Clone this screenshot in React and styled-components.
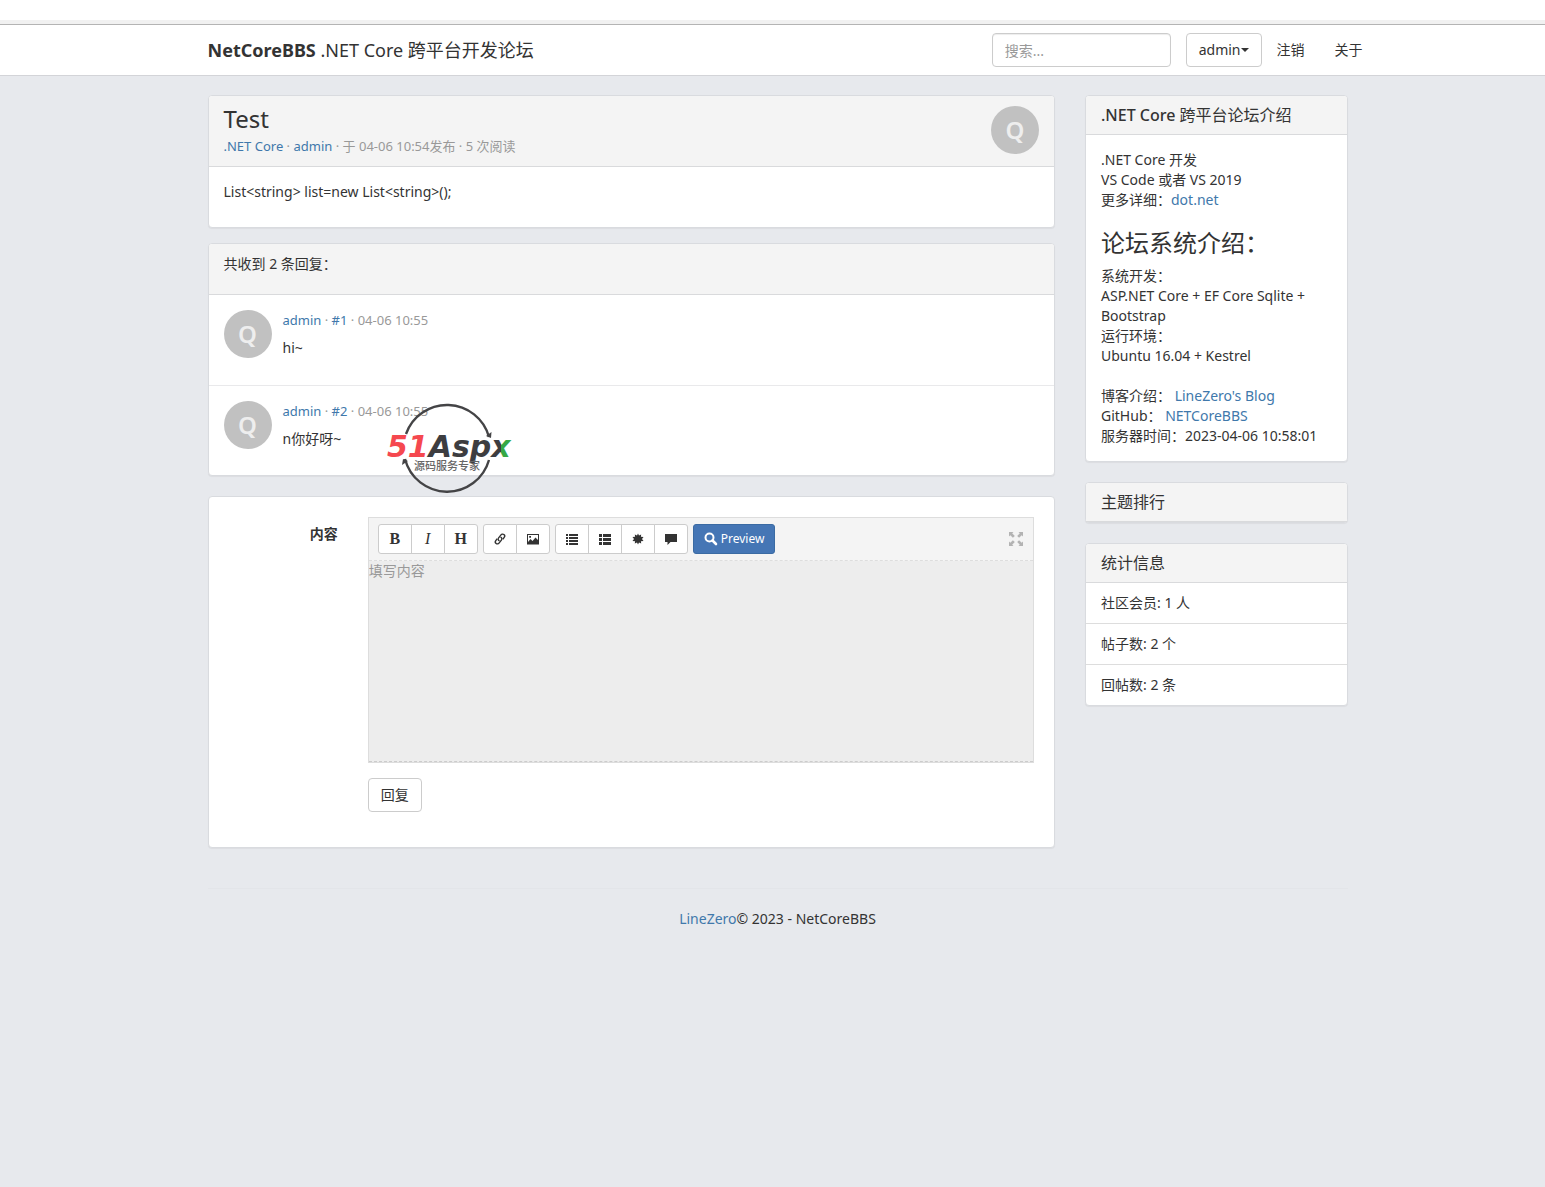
import React from "react";
import styled, { createGlobalStyle, css } from "styled-components";

const replies = [
  { id: 1, user: "admin", time: "04-06 10:55", text: "hi~" },
  { id: 2, user: "admin", time: "04-06 10:55", text: "n你好呀~" },
];

const stats = ["社区会员: 1 人", "帖子数: 2 个", "回帖数: 2 条"];

function LinkIcon() {
  return (
    <Icon viewBox="0 0 14 14" $line>
      <path d="M6.6 8.9C5.2 8.6 4.7 7 5.6 5.9L8 2.9c.7-.9 2-1.1 2.9-.4s1 2 .3 2.9L9.8 7.2" />
      <path d="M7.4 5.1c1.4.3 1.9 1.9 1 3L6 11.1c-.7.9-2 1.1-2.9.4s-1-2-.3-2.9l1.4-1.800" />
    </Icon>
  );
}

function PictureIcon() {
  return (
    <Icon viewBox="0 0 14 14">
      <path
        fillRule="evenodd"
        d="M1 2h12v10.5H1zM2 3v7l2.5-3 2 2 3-3.5L12 8V3zM3.2 4H5v1.800H3.2z"
      />
    </Icon>
  );
}

function ListIcon() {
  return (
    <Icon viewBox="0 0 14 14">
      <path d="M1 2h2v2H1zM4 2h9v2H4zM1 5h2v2H1zM4 5h9v2H4zM1 8h2v2H1zM4 8h9v2H4zM1 11h2v2H1zM4 11h9v2H4z" />
    </Icon>
  );
}

function ThListIcon() {
  return (
    <Icon viewBox="0 0 14 14">
      <path d="M1 2h3v3H1zM5 2h8v3H5zM1 6h3v3H1zM5 6h8v3H5zM1 10h3v3H1zM5 10h8v3H5z" />
    </Icon>
  );
}

function CertificateIcon() {
  return (
    <Icon viewBox="0 0 14 14">
      <path d="M7 1.500 8 3.500l2.200-1L9.900 4.800l2.600.3L11 7l1.500 1.900-2.600.3.3 2.300-2.200-1L7 12.500l-1-2-2.200 1 .3-2.300-2.600-.3L3 7 1.500 5.100l2.600-.3-.3-2.300 2.200 1z" />
    </Icon>
  );
}

function CommentIcon() {
  return (
    <Icon viewBox="0 0 14 14">
      <path d="M1 2h12v8H6.500l-3 3v-3H1z" />
    </Icon>
  );
}

function SearchIcon() {
  return (
    <Icon viewBox="0 0 14 14">
      <circle cx="5.5" cy="5.5" r="4" fill="none" stroke="currentColor" strokeWidth="2" />
      <path d="M8.5 8.500l3.500 3.500" stroke="currentColor" strokeWidth="2.6" strokeLinecap="round" />
    </Icon>
  );
}

function FullscreenIcon() {
  return (
    <Icon viewBox="0 0 14 14">
      <path d="M0 0h4.500L3.200 1.300l2.600 2.600-1.900 1.900-2.600-2.600L0 4.500zM14 0v4.500l-1.300-1.300-2.600 2.600-1.900-1.900 2.600-2.600L9.500 0zM0 14V9.500l1.300 1.300 2.600-2.600 1.900 1.900-2.600 2.600L4.500 14zM14 14H9.500l1.300-1.300-2.600-2.600 1.900-1.900 2.600 2.600L14 9.500z" />
    </Icon>
  );
}

function SiteMark() {
  return (
    <Mark viewBox="0 0 130 96" role="img" aria-label="51Aspx">
      <defs>
        <linearGradient id="xfill" gradientUnits="userSpaceOnUse" x1="107" x2="127" y1="0" y2="0">
          <stop offset="0.5" stopColor="#3d3d40" />
          <stop offset="0.5" stopColor="#36a846" />
        </linearGradient>
      </defs>
      <g fill="none" stroke="#444446" strokeWidth="2.4">
        <path d="M22 34A43.500 43.500 0 0 1 105 37" />
        <path d="M105 60A43.500 43.500 0 0 1 21 59" />
      </g>
      <path d="M102 36l5 2 .5-6zM24 61l-5-2-1 6z" fill="#444446" />
      <text x="3" y="57" className="name">
        <tspan fill="#f5484f">51</tspan>
        <tspan fill="#3d3d40">Asp</tspan>
        <tspan fill="url(#xfill)">x</tspan>
      </text>
      <text x="30" y="70" className="sub">源码服务专家</text>
    </Mark>
  );
}

export default function App() {
  return (
    <>
      <GlobalStyle />
      <TopStrip />
      <Navbar>
        <NavInner>
          <Brand href="#">
            <b>NetCoreBBS</b> .NET Core 跨平台开发论坛
          </Brand>
          <NavRight>
            <SearchInput type="text" placeholder="搜索..." aria-label="搜索" />
            <Button type="button">
              admin
              <Caret />
            </Button>
            <NavLink href="#">注销</NavLink>
            <NavLink href="#">关于</NavLink>
          </NavRight>
        </NavInner>
      </Navbar>
      <Page>
        <Columns>
          <Column as="main">
            <Panel $gap={15}>
              <TopicHeading>
                <div>
                  <TopicTitle>Test</TopicTitle>
                  <Meta>
                    <a href="#">.NET Core</a> · <a href="#">admin</a> · 于 04-06 10:54发布 · 5 次阅读
                  </Meta>
                </div>
                <Avatar>Q</Avatar>
              </TopicHeading>
              <PanelBody>
                <Paragraph>List&lt;string&gt; list=new List&lt;string&gt;();</Paragraph>
              </PanelBody>
            </Panel>

            <Panel>
              <PanelHeading>
                <Paragraph>共收到 2 条回复：</Paragraph>
              </PanelHeading>
              <ReplyList>
                {replies.map((reply) => (
                  <Reply key={reply.id}>
                    <Avatar>Q</Avatar>
                    <div>
                      <Meta>
                        <a href="#">{reply.user}</a> · <a href="#">#{reply.id}</a> · {reply.time}
                      </Meta>
                      <ReplyText>{reply.text}</ReplyText>
                    </div>
                  </Reply>
                ))}
              </ReplyList>
              <SiteMark />
            </Panel>

            <Panel>
              <ReplyForm>
                <FormLabel htmlFor="content">内容</FormLabel>
                <FormField>
                  <Editor>
                    <Toolbar>
                      <ButtonGroup>
                        <ToolButton type="button" aria-label="Bold"><Letter>B</Letter></ToolButton>
                        <ToolButton type="button" aria-label="Italic"><Letter $italic>I</Letter></ToolButton>
                        <ToolButton type="button" aria-label="Heading"><Letter>H</Letter></ToolButton>
                      </ButtonGroup>
                      <ButtonGroup>
                        <ToolButton type="button" aria-label="Link"><LinkIcon /></ToolButton>
                        <ToolButton type="button" aria-label="Image"><PictureIcon /></ToolButton>
                      </ButtonGroup>
                      <ButtonGroup>
                        <ToolButton type="button" aria-label="List"><ListIcon /></ToolButton>
                        <ToolButton type="button" aria-label="Ordered list"><ThListIcon /></ToolButton>
                        <ToolButton type="button" aria-label="Code"><CertificateIcon /></ToolButton>
                        <ToolButton type="button" aria-label="Quote"><CommentIcon /></ToolButton>
                      </ButtonGroup>
                      <PreviewButton type="button">
                        <SearchIcon />
                        Preview
                      </PreviewButton>
                      <FullscreenButton type="button" aria-label="Fullscreen">
                        <FullscreenIcon />
                      </FullscreenButton>
                    </Toolbar>
                    <TextArea id="content" placeholder="填写内容" />
                  </Editor>
                  <Button type="submit">回复</Button>
                </FormField>
              </ReplyForm>
            </Panel>
          </Column>

          <Column as="aside">
            <Panel>
              <PanelHeading>
                <PanelTitle>
                  <strong>.NET Core</strong> 跨平台论坛介绍
                </PanelTitle>
              </PanelHeading>
              <PanelBody>
                .NET Core 开发
                <br />
                VS Code 或者 VS 2019
                <br />
                更多详细：<a href="#">dot.net</a>
                <IntroTitle>论坛系统介绍：</IntroTitle>
                系统开发：
                <br />
                ASP.NET Core + EF Core Sqlite + Bootstrap
                <br />
                运行环境：
                <br />
                Ubuntu 16.04 + Kestrel
                <br />
                <br />
                博客介绍： <a href="#">LineZero's Blog</a>
                <br />
                GitHub： <a href="#">NETCoreBBS</a>
                <br />
                服务器时间：2023-04-06 10:58:01
              </PanelBody>
            </Panel>
            <Panel>
              <PanelHeading>
                <PanelTitle>主题排行</PanelTitle>
              </PanelHeading>
            </Panel>
            <Panel>
              <PanelHeading>
                <PanelTitle>统计信息</PanelTitle>
              </PanelHeading>
              <StatList>
                {stats.map((stat) => (
                  <li key={stat}>{stat}</li>
                ))}
              </StatList>
            </Panel>
          </Column>
        </Columns>
        <Footer>
          <a href="#">LineZero</a>© 2023 - NetCoreBBS
        </Footer>
      </Page>
    </>
  );
}

const GlobalStyle = createGlobalStyle`
  * {
    box-sizing: border-box;
  }
  body {
    margin: 0;
    background: #e7e9ed;
    color: #333;
    font-family: "Noto Sans", "Noto Sans CJK SC", sans-serif;
    font-size: 14px;
    line-height: 20px;
  }
  button, input, textarea {
    font: inherit;
    color: inherit;
  }
  a {
    color: #4078ab;
    text-decoration: none;
  }
`;

const container = css`
  max-width: 1170px;
  margin: 0 auto;
`;

const TopStrip = styled.div`
  height: 25px;
  background: #fff;
  border-bottom: 1px solid #b4b4b4;
  box-shadow: inset 0 -4px #f1f1f1;
`;

const Navbar = styled.nav`
  padding-left: 10px;
  background: #fff;
  border-bottom: 1px solid #d3d4d8;
`;

const NavInner = styled.div`
  ${container};
  display: flex;
  align-items: center;
  justify-content: space-between;
  min-height: 50px;
  padding-left: 15px;
`;

const Brand = styled.a`
  color: #333;
  font-size: 18px;
`;

const NavRight = styled.div`
  display: flex;
  align-items: center;
  margin-right: -15px;
`;

const SearchInput = styled.input`
  width: 179px;
  height: 34px;
  margin-right: 15px;
  padding: 6px 12px;
  border: 1px solid #ccc;
  border-radius: 4px;
  background: #fff;
  box-shadow: inset 0 1px 1px rgba(0, 0, 0, 0.075);
  &::placeholder {
    color: #999;
  }
`;

const Button = styled.button`
  display: inline-flex;
  align-items: center;
  height: 34px;
  padding: 6px 12px;
  border: 1px solid #ccc;
  border-radius: 4px;
  background: #fff;
  cursor: pointer;
`;

const Caret = styled.span`
  border: 4px solid transparent;
  border-top-color: currentColor;
  border-bottom: 0;
`;

const NavLink = styled.a`
  padding: 15px;
  color: #333;
`;

const Page = styled.div`
  padding-left: 10px;
`;

const Columns = styled.div`
  ${container};
  display: grid;
  grid-template-columns: 3fr 1fr;
  padding-top: 19px;
`;

const Column = styled.div`
  min-width: 0;
  padding: 0 15px;
`;

const Panel = styled.section`
  position: relative;
  margin-bottom: ${(props) => props.$gap || 20}px;
  background: #fff;
  border: 1px solid #d9dbdf;
  border-radius: 4px;
  box-shadow: 0 1px 1px rgba(0, 0, 0, 0.05);
`;

const PanelHeading = styled.header`
  padding: 10px 15px;
  background: #f4f4f4;
  border-bottom: 1px solid #d9dadc;
  border-radius: 3px 3px 0 0;
`;

const TopicHeading = styled(PanelHeading)`
  display: flex;
  justify-content: space-between;
`;

const TopicTitle = styled.h1`
  margin: 0 0 4px;
  font-size: 24px;
  font-weight: 400;
  line-height: 26px;
`;

const PanelTitle = styled.h3`
  margin: 0;
  font-size: 16px;
  font-weight: 400;
  line-height: 18px;
  strong {
    font-weight: 500;
  }
`;

const PanelBody = styled.div`
  padding: 15px;
`;

const Paragraph = styled.p`
  margin: 0 0 10px;
`;

const Meta = styled.div`
  color: #999;
  font-size: 13px;
`;

const Avatar = styled.span`
  display: flex;
  flex: none;
  align-items: center;
  justify-content: center;
  width: 48px;
  height: 48px;
  border-radius: 50%;
  background: #c1c1c1;
  color: #eee;
  font-size: 24px;
  font-weight: 600;
`;

const ReplyList = styled.ul`
  margin: 0;
  padding: 0;
  list-style: none;
`;

const Reply = styled.li`
  display: flex;
  gap: 11px;
  padding: 15px;
  border-bottom: 1px solid #e9e9eb;
  &:last-child {
    padding-bottom: 14px;
    border-bottom: 0;
  }
`;

const ReplyText = styled.p`
  margin: 8px 0 12px;
`;

const Mark = styled.svg`
  position: absolute;
  top: 156px;
  left: 175px;
  width: 130px;
  height: 96px;
  z-index: 1;
  .name {
    font: italic bold 30px "DejaVu Sans", sans-serif;
  }
  .sub {
    font: 500 11px "Noto Sans CJK SC", sans-serif;
    fill: #666;
  }
`;

const ReplyForm = styled.form`
  display: grid;
  grid-template-columns: 1fr 5fr;
  padding: 20px 5px 35px;
`;

const FormLabel = styled.label`
  padding: 7px 15px;
  font-weight: 700;
  text-align: right;
`;

const FormField = styled.div`
  min-width: 0;
  padding: 0 15px;
`;

const Editor = styled.div`
  margin-bottom: 15px;
  border: 1px solid #ddd;
`;

const Toolbar = styled.div`
  display: flex;
  align-items: center;
  gap: 5px;
  padding: 6px 10px 6px 9px;
  background: #f4f4f4;
  border-bottom: 1px dashed #ddd;
`;

const ButtonGroup = styled.div`
  display: flex;
`;

const ToolButton = styled.button`
  display: flex;
  align-items: center;
  justify-content: center;
  width: 34px;
  height: 30px;
  padding: 0;
  border: 1px solid #ccc;
  background: #fff;
  cursor: pointer;
  & + & {
    margin-left: -1px;
  }
  &:first-child {
    border-radius: 3px 0 0 3px;
  }
  &:last-child {
    border-radius: 0 3px 3px 0;
  }
`;

const Letter = styled.span`
  font-family: "Liberation Serif", serif;
  font-size: 16px;
  font-weight: ${(props) => (props.$italic ? 400 : 700)};
  font-style: ${(props) => (props.$italic ? "italic" : "normal")};
`;

const Icon = styled.svg`
  width: 14px;
  height: 14px;
  fill: ${(props) => (props.$line ? "none" : "currentColor")};
  stroke: ${(props) => (props.$line ? "currentColor" : "none")};
  stroke-width: 1.4;
`;

const PreviewButton = styled.button`
  display: flex;
  align-items: center;
  gap: 3px;
  height: 30px;
  padding: 0 10px;
  border: 1px solid #3b6ba3;
  border-radius: 3px;
  background: #4576b5;
  color: #fff;
  font-size: 12px;
  cursor: pointer;
`;

const FullscreenButton = styled.button`
  display: flex;
  margin-left: auto;
  padding: 0;
  border: 0;
  background: none;
  color: #b3b3b3;
  cursor: pointer;
`;

const TextArea = styled.textarea`
  display: block;
  width: 100%;
  height: 201px;
  padding: 0;
  border: 0;
  border-bottom: 1px dashed #ccc;
  background: #ededed;
  resize: none;
  &::placeholder {
    color: #999;
  }
`;

const IntroTitle = styled.h3`
  margin: 20px 0 10px;
  font-size: 24px;
  font-weight: 400;
  line-height: 26px;
`;

const StatList = styled.ul`
  margin: 0;
  padding: 0;
  list-style: none;
  li {
    padding: 10px 15px;
  }
  li + li {
    border-top: 1px solid #ddd;
  }
`;

const Footer = styled.footer`
  max-width: 1140px;
  margin: 20px auto 0;
  padding: 20px 0;
  border-top: 1px solid #e3e5e9;
  text-align: center;
`;
